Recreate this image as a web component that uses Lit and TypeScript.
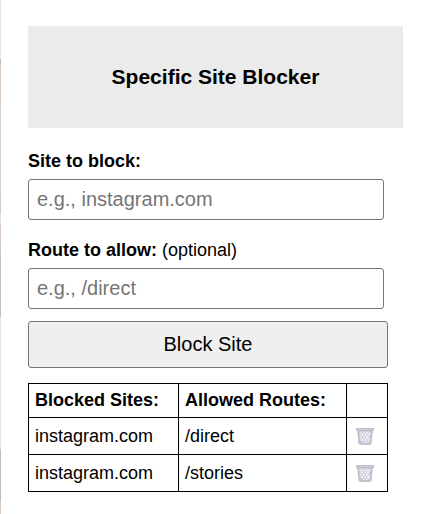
import { LitElement, html, css } from "lit";
import { customElement, state } from "lit/decorators.js";

interface BlockRule {
  site: string;
  route: string;
}

@customElement("trash-icon")
class TrashIcon extends LitElement {
  static styles = css`
    :host {
      display: block;
    }
    .icon {
      display: block;
      width: 18px;
      height: 18px;
    }
  `;

  render() {
    return html`
      <svg class="icon" viewBox="0 0 18 18" aria-hidden="true">
        <path d="M1 2H17L15.500 16.500Q15.300 18 13.500 18H4.500Q2.700 18 2.500 16.500Z" fill="#cdcbd8" />
        <path d="M3 5H15L14.200 15.500H3.800Z" fill="#d0ceda" />
        <g fill="#fbfbfd">
          <circle cx="4.800" cy="6.300" r="0.900" /><circle cx="7.800" cy="5.800" r="0.900" /><circle cx="11" cy="5.800" r="0.900" /><circle cx="13.500" cy="6.500" r="0.900" />
          <circle cx="6.200" cy="8.300" r="1.100" /><circle cx="9.400" cy="8" r="1.100" /><circle cx="12.400" cy="8.600" r="1" />
          <circle cx="4.900" cy="10.600" r="0.900" /><circle cx="7.900" cy="10.700" r="1.100" /><circle cx="10.900" cy="10.700" r="1.100" /><circle cx="13.400" cy="11.200" r="0.800" />
          <circle cx="6.200" cy="13.200" r="1.100" /><circle cx="9.300" cy="13.300" r="1.100" /><circle cx="12.200" cy="13.300" r="1" />
          <circle cx="7.700" cy="15.400" r="0.700" /><circle cx="10.700" cy="15.400" r="0.700" />
        </g>
        <path d="M6.300 10v1.500M9.400 10v1.300M7.800 13v1.300M10.800 13v1.300M7.800 7.500v1.300" stroke="#b4b2c5" stroke-width="0.800" />
        <path d="M14 8v2.500M5 14v1.500" stroke="#a9bcd6" stroke-width="1" />
        <path d="M2 4L3.300 16.500M16 4L14.700 16.500" stroke="#bebccb" stroke-width="1" fill="none" />
        <rect x="0" y="1" width="18" height="3" rx="1" fill="#bdbac9" />
        <path d="M1 2.500H17" stroke="#d3d1dc" stroke-width="1" />
        <path d="M4 17H14" stroke="#bab7c8" stroke-width="1" />
      </svg>
    `;
  }
}

@customElement("app-root")
class AppRoot extends LitElement {
  static styles = css`
    :host {
      display: block;
      box-sizing: border-box;
      min-height: 100vh;
      padding: 26px 24px 22px 28px;
      color: #000;
      font: 18px/21px "Liberation Sans", Arial, sans-serif;
      background:
        linear-gradient(
          #e6e4ec 0 59px,
          #bbb8c6 59px 64px,
          #d9c8bd 64px 107px,
          #d5d4dd 107px 190px,
          #d6c9c2 190px 214px,
          #e4e3ec 214px 223px,
          #d6c8bf 223px 240px,
          #cbc8d0 240px 255px,
          #bfbdca 255px 317px,
          #e5e3ec 317px 449px,
          #bcbac8 449px 500px,
          #d9c8be 500px
        ) left top / 1px 100% no-repeat,
        #fff;
    }
    .banner {
      display: flex;
      align-items: center;
      justify-content: center;
      padding: 39px 0;
      background: #ebebeb;
    }
    .title {
      margin: 0;
      font-size: 21px;
      line-height: 24px;
    }
    .content {
      padding-right: 15px;
    }
    .form {
      display: flex;
      flex-direction: column;
      gap: 12px;
      margin: 23px 0 15px;
    }
    .fields {
      display: flex;
      flex-direction: column;
      gap: 20px;
      padding-right: 4px;
    }
    .field {
      display: flex;
      flex-direction: column;
      gap: 7px;
    }
    .input {
      box-sizing: border-box;
      width: 100%;
      margin: 0;
      padding: 8px;
      border: 1px solid #767676;
      border-radius: 3px;
      background: #fff;
      color: #000;
      font: 20px/23px "Liberation Sans", Arial, sans-serif;
    }
    .input::placeholder {
      color: #757575;
    }
    .submit {
      margin: 0;
      padding: 11px;
      border: 1px solid #767676;
      border-radius: 3px;
      background: #efefef;
      color: #000;
      font: 20px/23px "Liberation Sans", Arial, sans-serif;
    }
    .rules {
      width: 100%;
      border-collapse: collapse;
      table-layout: fixed;
    }
    .cell {
      padding: 6px;
      border: 1px solid #000;
      text-align: left;
    }
    .site {
      width: 137px;
    }
    .action {
      width: 28px;
    }
    .remove {
      display: flex;
      align-items: center;
      justify-content: center;
      width: 24px;
      height: 24px;
      margin: 0;
      padding: 0;
      border: 0;
      background: none;
    }
  `;

  @state() private rules: BlockRule[] = [
    { site: "instagram.com", route: "/direct" },
    { site: "instagram.com", route: "/stories" },
  ];

  private addRule(event: SubmitEvent) {
    event.preventDefault();
    const form = event.target as HTMLFormElement;
    const data = new FormData(form);
    const site = String(data.get("site")).trim();
    if (!site) return;
    this.rules = [...this.rules, { site, route: String(data.get("route")).trim() }];
    form.reset();
  }

  private removeRule(rule: BlockRule) {
    this.rules = this.rules.filter((item) => item !== rule);
  }

  render() {
    return html`
      <header class="banner"><h1 class="title">Specific Site Blocker</h1></header>
      <main class="content">
        <form class="form" @submit=${this.addRule}>
          <div class="fields">
            <div class="field">
              <label for="site"><b>Site to block:</b></label>
              <input class="input" id="site" name="site" type="text" placeholder="e.g., instagram.com" />
            </div>
            <div class="field">
              <label for="route"><b>Route to allow:</b> (optional)</label>
              <input class="input" id="route" name="route" type="text" placeholder="e.g., /direct" />
            </div>
          </div>
          <button class="submit" type="submit">Block Site</button>
        </form>
        <table class="rules">
          <thead>
            <tr>
              <th class="cell site" scope="col">Blocked Sites:</th>
              <th class="cell" scope="col">Allowed Routes:</th>
              <td class="cell action"></td>
            </tr>
          </thead>
          <tbody>
            ${this.rules.map(
              (rule) => html`
                <tr>
                  <td class="cell">${rule.site}</td>
                  <td class="cell">${rule.route}</td>
                  <td class="cell">
                    <button class="remove" type="button" aria-label="Remove" @click=${() => this.removeRule(rule)}>
                      <trash-icon></trash-icon>
                    </button>
                  </td>
                </tr>
              `,
            )}
          </tbody>
        </table>
      </main>
    `;
  }
}
